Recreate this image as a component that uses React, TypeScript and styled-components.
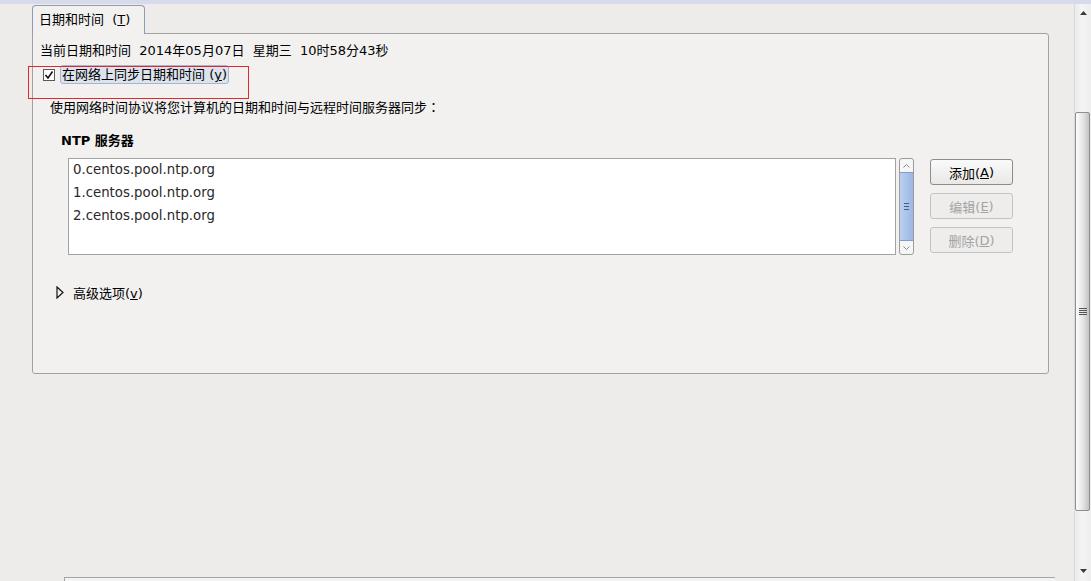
import styled, { createGlobalStyle } from "styled-components";

const GlobalStyle = createGlobalStyle`
  body {
    margin: 0;
    background: #edeceb;
    font-family: "DejaVu Sans", "Noto Sans CJK SC", sans-serif;
    font-size: 13px;
    color: #000;
  }
`;

const Window = styled.div`
  position: relative;
  width: 1091px;
  height: 581px;
  overflow: hidden;
  display: flex;
  flex-direction: column;
  background: #edeceb;
`;

const TopStrip = styled.div`
  height: 4px;
  background: #d6daea;
`;

const Body = styled.div`
  flex: 1;
  display: flex;
  min-height: 0;
`;

const Main = styled.div`
  flex: 1;
  display: flex;
  flex-direction: column;
  padding: 1px 0 0 32px;
`;

const TabBar = styled.div`
  display: flex;
  height: 29px;
`;

const Tab = styled.div`
  position: relative;
  z-index: 1;
  width: 113px;
  height: 29px;
  padding-left: 6px;
  box-sizing: border-box;
  border: 1px solid #8f9bb0;
  border-bottom: none;
  border-radius: 4px 4px 0 0;
  background: #f2f1f0;
  line-height: 28px;
  white-space: pre;
`;

const Panel = styled.div`
  width: 1017px;
  height: 341px;
  box-sizing: border-box;
  margin-top: -1px;
  border: 1px solid #a2a2a2;
  border-radius: 0 3px 3px 3px;
  background: #f2f1f0;
  padding: 0 7px;
`;

const Row = styled.div<{ $indent?: number; $top?: number }>`
  display: flex;
  align-items: center;
  padding-left: ${(p) => p.$indent ?? 0}px;
  margin-top: ${(p) => p.$top ?? 0}px;
  min-height: 18px;
  white-space: pre;
`;

const Cjk = styled.span`
  font-family: "Noto Sans CJK JP", sans-serif;
`;

const CheckBox = styled.span`
  width: 12px;
  height: 12px;
  box-sizing: border-box;
  border: 1px solid #5a5a5a;
  background: #fff;
  display: flex;
  align-items: center;
  justify-content: center;
  margin-right: 5px;
`;

const FocusLabel = styled.span`
  height: 19px;
  padding: 0 1px;
  line-height: 18px;
  box-sizing: border-box;
  border: 1px solid #a7b6cc;
  border-radius: 3px;
  background: #dce3ed;
`;

const Heading = styled.span`
  font-weight: bold;
`;

const ServerRow = styled.div`
  display: flex;
  align-items: flex-start;
  padding-left: 28px;
  margin-top: 9px;
`;

const ServerList = styled.div`
  width: 828px;
  height: 97px;
  box-sizing: border-box;
  border: 1px solid #a3a3a3;
  background: #fff;
  padding-left: 4px;
  color: #2a2a2a;
  font-size: 13.3px;
`;

const ServerItem = styled.div`
  height: 23px;
  line-height: 22px;
`;

const ListScroll = styled.div`
  width: 15px;
  height: 97px;
  margin-left: 3px;
  box-sizing: border-box;
  border: 1px solid #9c9c9c;
  border-radius: 3px;
  background: #f6f6f6;
  display: flex;
  flex-direction: column;
  overflow: hidden;
`;

const ScrollEnd = styled.div`
  height: 13px;
  display: flex;
  align-items: center;
  justify-content: center;
`;

const ListThumb = styled.div`
  flex: 1;
  background: linear-gradient(to right, #bcd0ee, #9ab7e3);
  border-top: 1px solid #7f9ecb;
  border-bottom: 1px solid #7f9ecb;
  display: flex;
  align-items: center;
  justify-content: center;
`;

const Grip = styled.div`
  width: 5px;
  height: 5px;
  border-top: 1px solid #3f5f8f;
  border-bottom: 1px solid #3f5f8f;
  position: relative;
  &::after {
    content: "";
    position: absolute;
    left: 0;
    right: 0;
    top: 2px;
    border-top: 1px solid #3f5f8f;
  }
`;

const ButtonColumn = styled.div`
  display: flex;
  flex-direction: column;
  gap: 8px;
  margin: 1px 0 0 16px;
`;

const Button = styled.div<{ $disabled?: boolean }>`
  width: 83px;
  height: 26px;
  box-sizing: border-box;
  border: 1px solid ${(p) => (p.$disabled ? "#c3c3c3" : "#8c8c8c")};
  border-radius: 3px;
  background: ${(p) =>
    p.$disabled ? "#eeedec" : "linear-gradient(#fafafa, #e9e8e7)"};
  color: ${(p) => (p.$disabled ? "#a3a3a3" : "#000")};
  display: flex;
  align-items: center;
  justify-content: center;
`;

const Expander = styled(Row)`
  gap: 9px;
`;

const Spacer = styled.div`
  flex: 1;
`;

const BottomStrip = styled.div`
  margin-left: 32px;
  width: 991px;
  height: 4px;
  box-sizing: border-box;
  border-top: 1px solid #a5a5a5;
  border-left: 1px solid #a5a5a5;
  background: #f3f3f3;
`;

const VScroll = styled.div`
  width: 16px;
  display: flex;
  flex-direction: column;
  border-left: 1px solid #dadada;
  background: linear-gradient(to right, #ebebeb, #f4f4f4 40%, #eeeeee);
`;

const VEnd = styled.div<{ $h: number }>`
  height: ${(p) => p.$h}px;
  display: flex;
  align-items: center;
  justify-content: center;
`;

const Trough = styled.div`
  flex: 1;
  padding-top: 90px;
`;

const VThumb = styled.div`
  height: 399px;
  margin: 0 1px 0 0;
  box-sizing: border-box;
  border: 1px solid #8e8e8e;
  border-radius: 2px;
  background: linear-gradient(to right, #fdfdfd, #e4e4e4 55%, #c2c2c2);
  display: flex;
  align-items: center;
  justify-content: center;
`;

const VGrip = styled.div`
  width: 8px;
  height: 7px;
  background: repeating-linear-gradient(#555 0 1px, transparent 1px 2px);
`;

const Annotation = styled.div`
  position: absolute;
  left: 28px;
  top: 66px;
  width: 221px;
  height: 33px;
  box-sizing: border-box;
  border: 1px solid #e5262b;
  pointer-events: none;
`;

const servers = ["0.centos.pool.ntp.org", "1.centos.pool.ntp.org", "2.centos.pool.ntp.org"];

const Chevron = ({ up }: { up?: boolean }) => (
  <svg width="7" height="4" viewBox="0 0 7 4">
    <polyline
      points={up ? "0.5,3.5 3.5,0.5 6.5,3.5" : "0.5,0.5 3.5,3.5 6.5,0.5"}
      fill="none"
      stroke="#8a8a8a"
      strokeWidth="1"
    />
  </svg>
);

const Arrow = ({ up }: { up?: boolean }) => (
  <svg width="7" height="4" viewBox="0 0 7 4">
    <polygon points={up ? "0,4 3.5,0 7,4" : "0,0 3.5,4 7,0"} fill="#3a3a3a" />
  </svg>
);

const App = () => {
  return (
    <Window>
      <GlobalStyle />
      <TopStrip />
      <Body>
        <Main>
          <TabBar>
            <Tab>
              日期和时间  (<u>T</u>)
            </Tab>
          </TabBar>
          <Panel>
            <Row $top={6}>当前日期和时间  2014年05月07日  星期三  10时58分43秒</Row>
            <Row $indent={3} $top={6}>
              <CheckBox>
                <svg width="10" height="10" viewBox="0 0 10 10">
                  <polyline points="1.5,5 4,8 8.5,1.5" fill="none" stroke="#111" strokeWidth="1.6" />
                </svg>
              </CheckBox>
              <FocusLabel>
                在网络上同步日期和时间 (<u>y</u>)
              </FocusLabel>
            </Row>
            <Row $indent={10} $top={13}>
              使用网络时间协议将您计算机的日期和时间与远程时间服务器同步<Cjk>：</Cjk>
            </Row>
            <Row $indent={21} $top={14}>
              <Heading>NTP 服务器</Heading>
            </Row>
            <ServerRow>
              <ServerList>
                {servers.map((s) => (
                  <ServerItem key={s}>{s}</ServerItem>
                ))}
              </ServerList>
              <ListScroll>
                <ScrollEnd>
                  <Chevron up />
                </ScrollEnd>
                <ListThumb>
                  <Grip />
                </ListThumb>
                <ScrollEnd>
                  <Chevron />
                </ScrollEnd>
              </ListScroll>
              <ButtonColumn>
                <Button>
                  添加(<u>A</u>)
                </Button>
                <Button $disabled>
                  编辑(<u>E</u>)
                </Button>
                <Button $disabled>
                  删除(<u>D</u>)
                </Button>
              </ButtonColumn>
            </ServerRow>
            <Expander $indent={16} $top={28}>
              <svg width="8" height="13" viewBox="0 0 8 13">
                <polygon points="1,1 7,6.5 1,12" fill="none" stroke="#111" strokeWidth="1.2" />
              </svg>
              <span>
                高级选项(<u>v</u>)
              </span>
            </Expander>
          </Panel>
          <Spacer />
          <BottomStrip />
        </Main>
        <VScroll>
          <VEnd $h={18}>
            <Arrow up />
          </VEnd>
          <Trough>
            <VThumb>
              <VGrip />
            </VThumb>
          </Trough>
          <VEnd $h={20}>
            <Arrow />
          </VEnd>
        </VScroll>
      </Body>
      <Annotation />
    </Window>
  );
};

export default App;
